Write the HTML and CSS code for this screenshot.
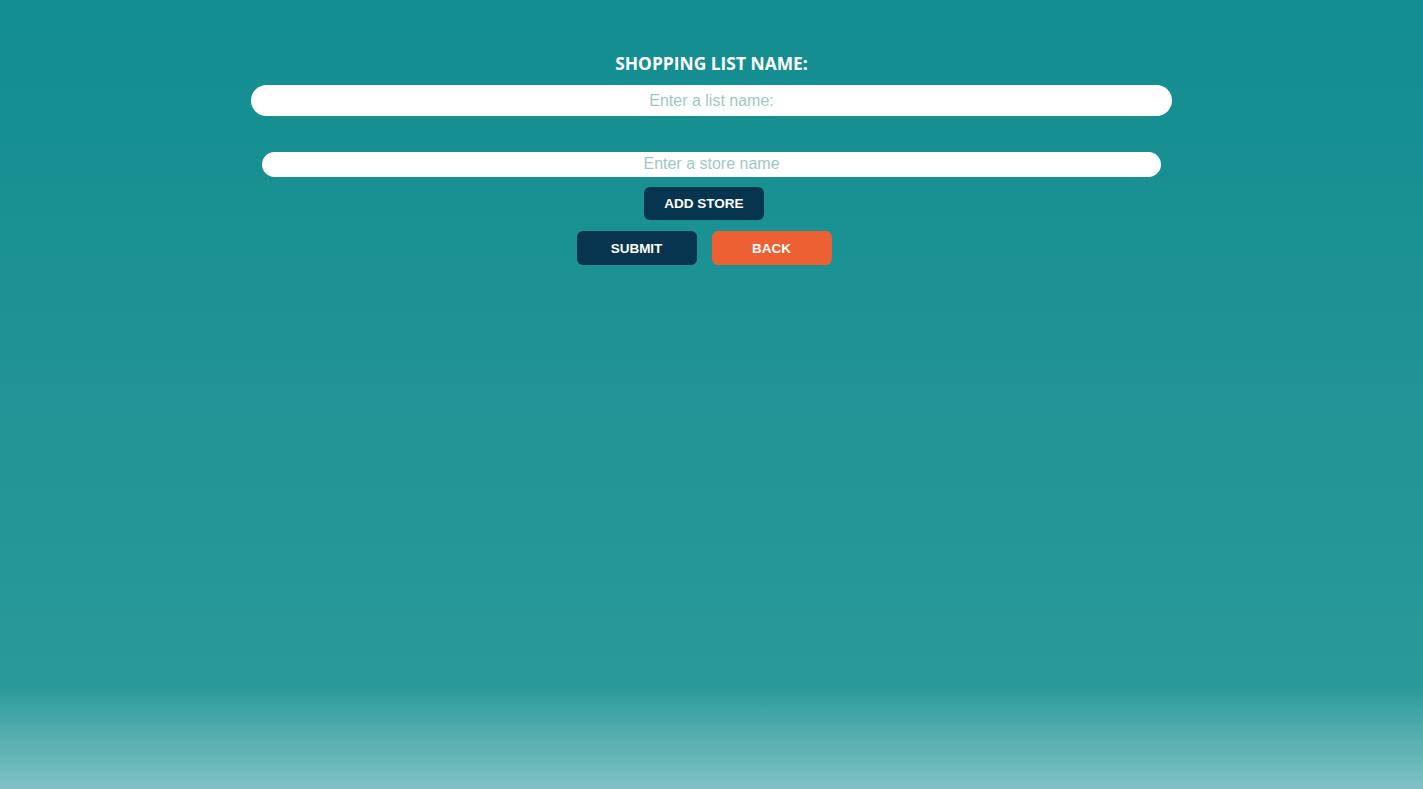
FILE: index.html
```html
<!DOCTYPE html>
<html lang="en">
<head>
<meta charset="utf-8">
<title>Shopping List</title>
<link rel="stylesheet" href="styles.css">
</head>
<body>
<main class="page">
  <form class="list-form">
    <label class="title" for="listName">SHOPPING LIST NAME:</label>
    <input class="field field-list" id="listName" type="text" placeholder="Enter a list name:">
    <input class="field field-store" type="text" placeholder="Enter a store name">
    <button class="btn btn-dark btn-add" type="button">ADD STORE</button>
    <div class="actions">
      <button class="btn btn-dark" type="button">SUBMIT</button>
      <button class="btn btn-orange" type="button">BACK</button>
    </div>
  </form>
</main>
</body>
</html>
```
FILE: styles.css
```css
html, body {
  margin: 0;
  padding: 0;
  height: 100%;
}
body {
  background: linear-gradient(to bottom, #128d90 0px, #2a999a 685px, #80c2c4 789px);
  font-family: "Liberation Sans", Arial, sans-serif;
  min-height: 789px;
}
.page {
  display: flex;
  justify-content: center;
  padding-top: 51px;
}
.list-form {
  display: flex;
  flex-direction: column;
  align-items: center;
  width: 921px;
}
.title {
  font-family: "Open Sans", sans-serif;
  font-weight: 700;
  font-size: 17.4px;
  line-height: 24px;
  color: #ffffff;
  margin-bottom: 10px;
}
.field {
  box-sizing: border-box;
  border: none;
  outline: none;
  background: #ffffff;
  text-align: center;
  font-family: "Liberation Sans", Arial, sans-serif;
  font-size: 16px;
  color: #333;
  padding: 0 12px;
}
.field::placeholder {
  color: #9dc8c4;
  opacity: 1;
}
.field-list {
  width: 921px;
  height: 31px;
  border-radius: 16px;
}
.field-store {
  width: 899px;
  height: 25px;
  border-radius: 13px;
  margin-top: 36px;
  padding-bottom: 2px;
}
.btn {
  box-sizing: border-box;
  width: 120px;
  height: 34px;
  margin-right: 15px;
  border: none;
  border-radius: 6px;
  color: #ffffff;
  font-family: "Liberation Sans", Arial, sans-serif;
  font-weight: 700;
  font-size: 13.5px;
  cursor: pointer;
}
.btn-add {
  margin-top: 10px;
  height: 33px;
}
.btn-dark {
  background: #07354f;
}
.btn-orange {
  background: #ec6033;
}
.actions {
  display: flex;
  margin-top: 11px;
}
```
